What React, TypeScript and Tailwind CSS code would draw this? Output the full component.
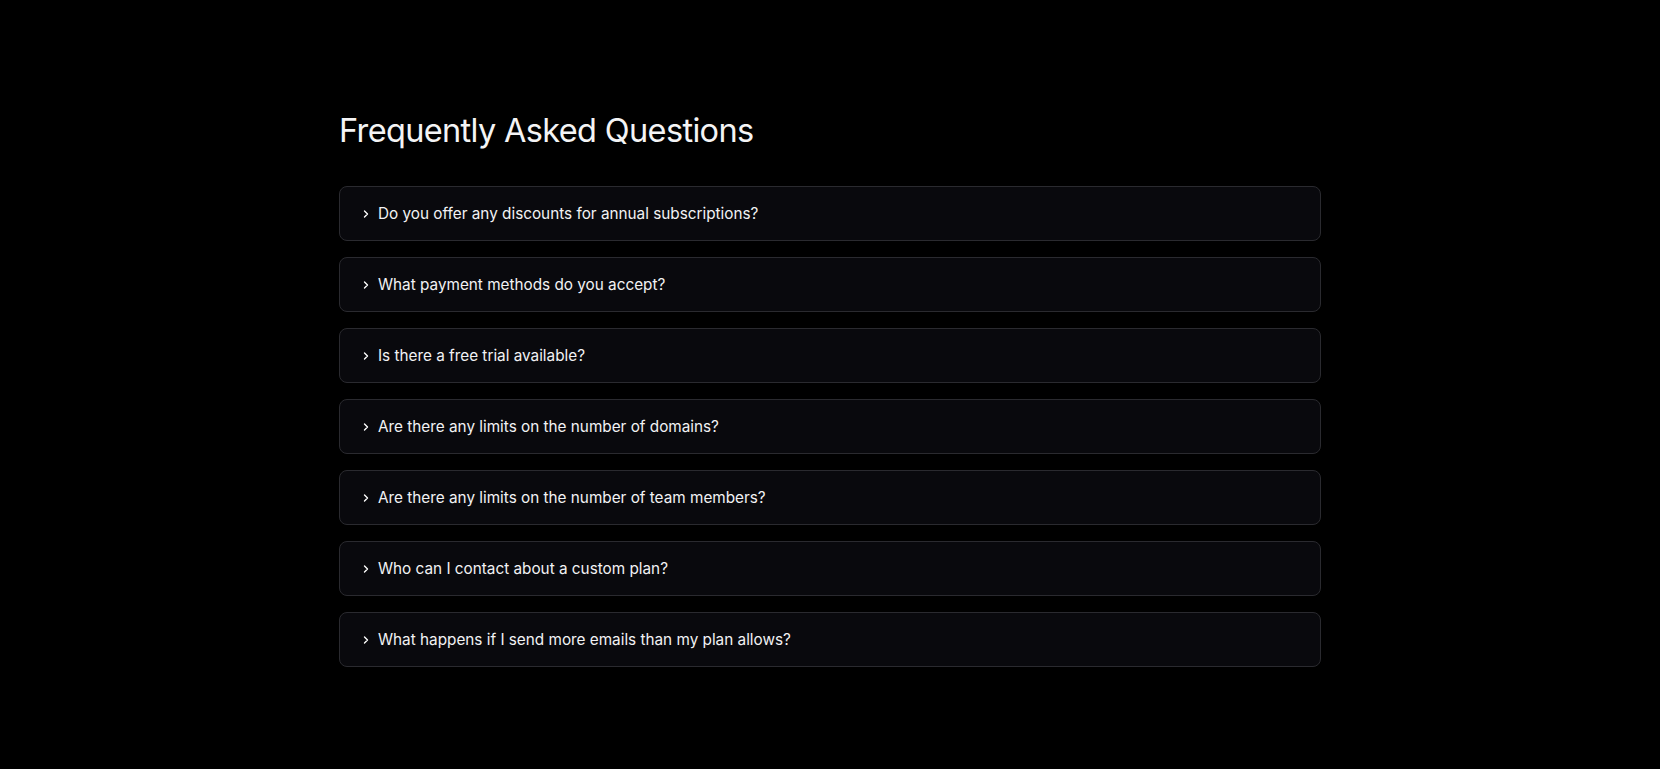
import { ChevronRight } from "lucide-react";

const questions = [
  "Do you offer any discounts for annual subscriptions?",
  "What payment methods do you accept?",
  "Is there a free trial available?",
  "Are there any limits on the number of domains?",
  "Are there any limits on the number of team members?",
  "Who can I contact about a custom plan?",
  "What happens if I send more emails than my plan allows?",
];

export default function App() {
  return (
    <div className="min-h-screen bg-black font-['Inter',sans-serif] text-white">
      <div className="mx-auto w-[982px] pt-[108px] pb-[100px]">
        <h1 className="text-[32.5px] font-normal leading-[46px] tracking-[-0.02em] text-[#f4f4f5]">
          Frequently Asked Questions
        </h1>
        <div className="mt-[32px] flex flex-col gap-4">
          {questions.map((q) => (
            <button
              key={q}
              className="flex h-[55px] w-full items-center gap-[6px] rounded-lg border border-[#2a2a2f] bg-[#09090d] pl-[20px] pt-[2px] text-left text-[15.3px] text-[#f2f2f4]"
            >
              <ChevronRight size={12} strokeWidth={2.75} className="-mt-[2px] text-white" />
              <span>{q}</span>
            </button>
          ))}
        </div>
      </div>
    </div>
  );
}
